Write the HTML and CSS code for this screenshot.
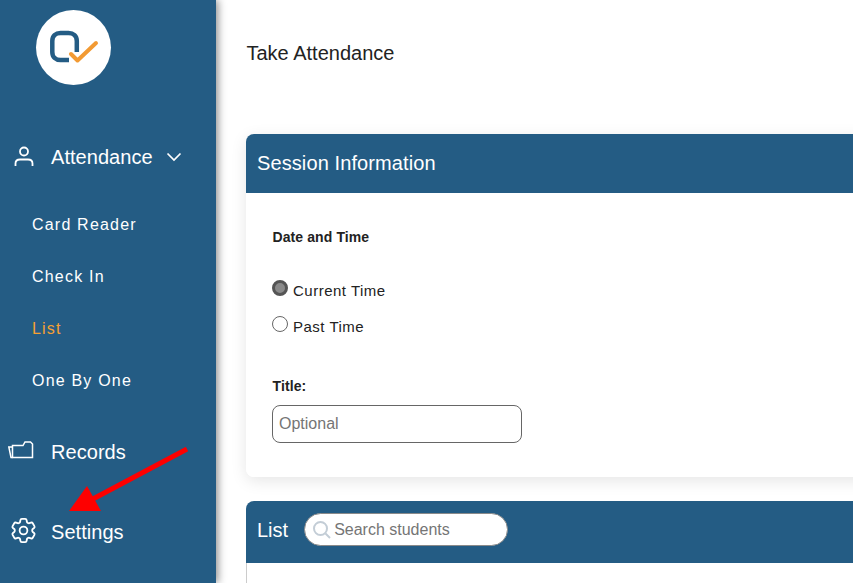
FILE: index.html
```html
<!DOCTYPE html>
<html lang="en">
<head>
    <meta charset="UTF-8">
    <meta name="viewport" content="width=device-width, initial-scale=1.0">
    <title>Take Attendance</title>
    <link rel="stylesheet" href="styles.css">
</head>
<body>
    <aside class="sidebar">
        <div class="logo">
            <svg width="75" height="75" viewBox="0 0 75 75">
                <path d="M33 50H24.500C19.500 50 16.300 47 16.300 42V31C16.300 26 19.500 23 24.500 23H32.500C37.500 23 40.800 26 40.800 31V42" fill="none" stroke="#245c84" stroke-width="4.500"/>
                <path d="M35 44L41.500 50.500L60 33" fill="none" stroke="#f29a33" stroke-width="4" stroke-linecap="round" stroke-linejoin="round"/>
            </svg>
        </div>
        <nav class="nav">
            <div class="nav-item nav-attendance">
                <svg class="nav-icon" width="24" height="24" viewBox="0 0 24 24" fill="none" stroke="#fff" stroke-width="1.800">
                    <circle cx="12" cy="6.500" r="4"/>
                    <path d="M3.500 21V18.500C3.500 16 5.500 14.500 8 14.500H16C18.500 14.500 20.500 16 20.500 18.500V21"/>
                </svg>
                <span>Attendance</span>
                <svg class="chevron" width="16" height="10" viewBox="0 0 16 10" fill="none" stroke="#fff" stroke-width="1.700">
                    <path d="M1.500 1.500L8 8L14.500 1.500"/>
                </svg>
            </div>
            <ul class="subnav">
                <li>Card Reader</li>
                <li>Check In</li>
                <li class="active">List</li>
                <li>One By One</li>
            </ul>
            <div class="nav-item nav-records">
                <svg class="nav-icon" width="26" height="18" viewBox="0 0 26 18" fill="none" stroke="#fff" stroke-width="1.500">
                    <path d="M4.500 16.500V4.500H15L17 1H22.500L24.500 3V16.500Z"/>
                    <path d="M4.500 16.500H3L0.800 6H4.500"/>
                </svg>
                <span>Records</span>
            </div>
            <div class="nav-item nav-settings">
                <svg class="nav-icon" width="31" height="31" viewBox="0 0 24 24" fill="none" stroke="#fff" stroke-width="1.400">
                    <path d="M9.594 3.940c.09-.542.56-.94 1.110-.94h2.593c.55 0 1.020.398 1.110.94l.213 1.281c.063.374.313.686.645.870.074.040.147.083.22.127.325.196.72.257 1.075.124l1.217-.456a1.125 1.125 0 0 1 1.370.490l1.296 2.247a1.125 1.125 0 0 1-.26 1.431l-1.003.827c-.293.241-.438.613-.43.992a7.723 7.723 0 0 1 0 .255c-.008.378.137.75.43.991l1.004.827c.424.35.534.955.26 1.430l-1.298 2.247a1.125 1.125 0 0 1-1.369.491l-1.217-.456c-.355-.133-.75-.072-1.076.124a6.470 6.470 0 0 1-.22.128c-.331.183-.581.495-.644.869l-.213 1.281c-.09.543-.56.94-1.110.94h-2.594c-.55 0-1.019-.398-1.110-.94l-.213-1.281c-.062-.374-.312-.686-.644-.87a6.520 6.520 0 0 1-.22-.127c-.325-.196-.72-.257-1.076-.124l-1.217.456a1.125 1.125 0 0 1-1.369-.49l-1.297-2.247a1.125 1.125 0 0 1 .26-1.431l1.004-.827c.292-.24.437-.613.43-.991a6.932 6.932 0 0 1 0-.255c.007-.38-.138-.751-.43-.992l-1.004-.827a1.125 1.125 0 0 1-.26-1.430l1.297-2.247a1.125 1.125 0 0 1 1.370-.491l1.216.456c.356.133.751.072 1.076-.124.072-.044.146-.086.22-.128.332-.183.582-.495.644-.869l.214-1.280Z"/>
                    <circle cx="12" cy="12" r="3"/>
                </svg>
                <span>Settings</span>
            </div>
        </nav>
    </aside>

    <main class="content">
        <h1 class="page-title">Take Attendance</h1>

        <section class="card">
            <h2 class="card-head">Session Information</h2>
            <div class="card-body">
                <h3 class="label">Date and Time</h3>
                <div class="radio-row radio-first">
                    <span class="radio radio-checked"></span>
                    <span>Current Time</span>
                </div>
                <div class="radio-row">
                    <span class="radio"></span>
                    <span>Past Time</span>
                </div>
                <h3 class="label label-title">Title:</h3>
                <input class="title-input" type="text" placeholder="Optional">
            </div>
        </section>

        <section class="list-card">
            <div class="card-head list-head">
                <h2 class="list-title">List</h2>
                <div class="search">
                    <svg width="20" height="20" viewBox="0 0 20 20" fill="none" stroke="#c3cdd6" stroke-width="2">
                        <circle cx="8.500" cy="8.500" r="6.500"/>
                        <path d="M13.500 13.500L18 18"/>
                    </svg>
                    <input class="search-input" type="text" placeholder="Search students">
                </div>
            </div>
            <div class="list-body"></div>
        </section>
    </main>

    <svg class="arrow" width="130" height="75" viewBox="0 0 130 75">
        <path d="M118 2L22 53" stroke="#fe0000" stroke-width="5" fill="none"/>
        <polygon points="0,64 18,39 32,64" fill="#fe0000"/>
    </svg>
</body>
</html>
```

FILE: styles.css
```css
* {
    box-sizing: border-box;
    margin: 0;
    padding: 0;
}

html, body {
    height: 100%;
    overflow: hidden;
}

body {
    display: flex;
    font-family: "Liberation Sans", Arial, sans-serif;
    background-color: #fff;
    color: #222;
}

.sidebar {
    flex: 0 0 216px;
    height: 583px;
    background-color: #245c84;
    box-shadow: 2px 0 8px rgba(0, 0, 0, 0.45);
    color: #fff;
    padding-top: 10px;
    position: relative;
}

.logo {
    width: 75px;
    height: 75px;
    margin-left: 36px;
    border-radius: 50%;
    background-color: #fff;
}

.logo svg {
    display: block;
}

.nav {
    margin-top: 57px;
}

.nav-item {
    display: flex;
    align-items: center;
    height: 30px;
    font-size: 20px;
    letter-spacing: 0.05px;
}

.nav-item span {
    margin-left: 51px;
}

.nav-icon {
    position: absolute;
}

.nav-attendance .nav-icon {
    left: 12px;
}

.nav-records .nav-icon {
    left: 8px;
    margin-top: -5px;
}

.nav-settings .nav-icon {
    left: 8px;
    margin-top: -3px;
}

.chevron {
    margin-left: 13px;
}

.subnav {
    list-style: none;
    margin-top: 43px;
}

.subnav li {
    height: 52px;
    line-height: 20px;
    padding-left: 32px;
    font-size: 16px;
    letter-spacing: 1.2px;
}

.subnav .active {
    color: #f5a033;
}

.nav-records {
    margin-top: 14px;
}

.nav-settings {
    margin-top: 50px;
}

.content {
    flex: 1;
    min-width: 0;
    padding: 42px 0 0 30px;
}

.page-title {
    font-size: 20px;
    font-weight: normal;
    line-height: 23px;
    padding-left: 0.5px;
    color: #222;
}

.card {
    margin-top: 69px;
    width: 640px;
    border-radius: 8px;
    box-shadow: 0 4px 16px rgba(0, 0, 0, 0.1);
}

.card-head {
    height: 59px;
    background-color: #245c84;
    border-radius: 8px 0 0 0;
    color: #fff;
    font-size: 20px;
    font-weight: normal;
    line-height: 59px;
    letter-spacing: 0.1px;
    padding-left: 11px;
}

.card-body {
    height: 284px;
    padding: 36px 26px 0;
    background-color: #fff;
    border-radius: 0 0 8px 8px;
}

.label {
    font-size: 14px;
    font-weight: bold;
    line-height: 16px;
    letter-spacing: 0.1px;
    padding-left: 0.5px;
    color: #222;
}

.radio-row {
    display: flex;
    align-items: center;
    height: 20px;
    margin-top: 16px;
    font-size: 15px;
    letter-spacing: 0.5px;
}

.radio-first {
    margin-top: 35px;
}

.radio {
    width: 16px;
    height: 16px;
    margin: -4px 5px 0 0;
    border: 1px solid #666;
    border-radius: 50%;
    background-color: #fff;
}

.radio-checked {
    border: 3px solid #555;
    background-color: #8a8a8a;
}

.label-title {
    margin-top: 42px;
}

.title-input {
    display: block;
    width: 250px;
    height: 38px;
    margin-top: 11px;
    padding: 0 6px;
    border: 1px solid #666;
    border-radius: 8px;
    font-family: "Liberation Sans", Arial, sans-serif;
    font-size: 16px;
}

input::placeholder {
    color: #757575;
    opacity: 1;
}

.list-card {
    margin-top: 24px;
    width: 640px;
}

.list-head {
    display: flex;
    align-items: center;
    height: 62px;
    padding-bottom: 3px;
}

.list-title {
    font-size: 20px;
    font-weight: normal;
    letter-spacing: 0;
}

.search {
    display: flex;
    align-items: center;
    width: 204px;
    height: 33px;
    margin: -2px 0 0 16px;
    padding-left: 7px;
    background-color: #fff;
    border: 1px solid #8a8a8a;
    border-radius: 17px;
}

.search svg {
    flex: none;
}

.search-input {
    width: 165px;
    margin-left: 2px;
    border: none;
    outline: none;
    background: none;
    font-family: "Liberation Sans", Arial, sans-serif;
    font-size: 16px;
}

.list-body {
    height: 40px;
    border-left: 1px solid #ccc;
    background-color: #fff;
}

.arrow {
    position: absolute;
    left: 69px;
    top: 447px;
}
```
